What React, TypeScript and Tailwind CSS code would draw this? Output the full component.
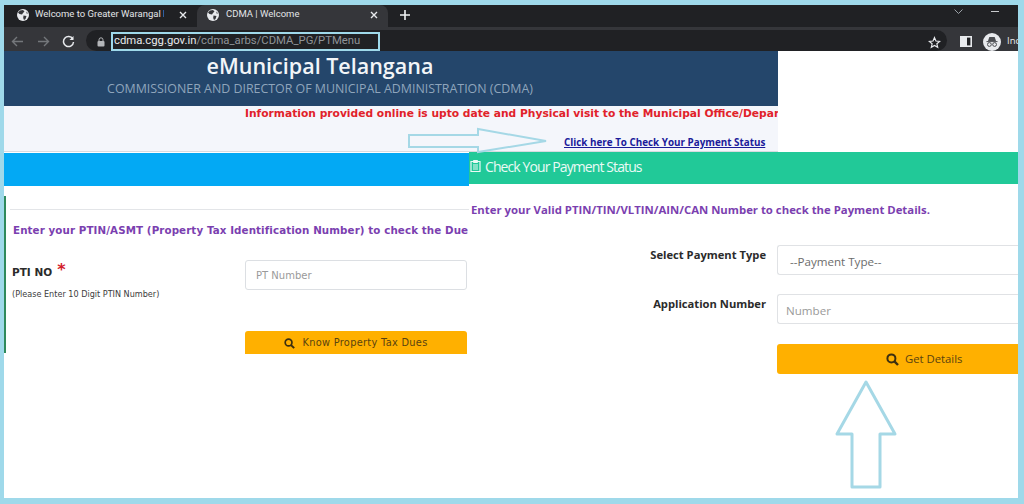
import React from "react";

const sans = "font-['Open_Sans','Noto_Sans',sans-serif]";
const roboto = "font-['Roboto','Open_Sans',sans-serif]";
const verdana = "font-['DejaVu_Sans',sans-serif]";

function Globe() {
  return (
    <svg width="12" height="12" viewBox="0 0 12 12" className="shrink-0">
      <circle cx="6" cy="6" r="6" fill="#e8eaed" />
      <path d="M3 1.5 L6 1 L7.5 2.5 L6 4 L5 5.5 L2.5 5 L1 3.5 Z M6.5 6.5 L9.5 7 L8.5 10 L7 11 L6.2 9 Z M9.5 2.5 L11 4.5 L9.5 4.5 Z" fill="#35363a" />
    </svg>
  );
}

function Close() {
  return (
    <svg width="8" height="8" viewBox="0 0 8 8" className="shrink-0">
      <path d="M1 1 L7 7 M7 1 L1 7" stroke="#e8eaed" strokeWidth="1.4" />
    </svg>
  );
}

function Search({ size = 13 }: { size?: number }) {
  return (
    <svg width={size} height={size} viewBox="0 0 13 13" className="shrink-0">
      <circle cx="5.4" cy="5.4" r="4" fill="none" stroke="#3d3010" strokeWidth="2" />
      <path d="M8.4 8.4 L12 12" stroke="#3d3010" strokeWidth="2.4" />
    </svg>
  );
}

export default function App() {
  return (
    <div className="relative flex h-[504px] w-[1024px] flex-col overflow-hidden bg-[#9fd9ea] pb-[6px] pl-1 pr-[6px] pt-[5px]">
      {/* tab strip */}
      <div className={`flex h-[22px] shrink-0 items-stretch bg-[#202124] text-[9.5px] text-[#e3e5e8] ${roboto}`}>
        <div className="flex w-[193px] items-center pb-[3px] pl-[13px]">
          <Globe />
          <span className="ml-[6px] w-[129px] overflow-hidden whitespace-nowrap">Welcome to Greater Warangal Municipal</span>
          <span className="ml-[15px]"><Close /></span>
        </div>
        <div className="flex w-[191px] items-center rounded-t-lg bg-[#35363a] pb-[3px] pl-[10px]">
          <Globe />
          <span className="ml-[7px] w-[144px] whitespace-nowrap">CDMA | Welcome</span>
          <Close />
        </div>
        <div className="ml-[12px] flex items-center pb-[3px]">
          <svg width="10" height="10" viewBox="0 0 10 10"><path d="M5 0 V10 M0 5 H10" stroke="#f1f3f4" strokeWidth="1.6" /></svg>
        </div>
        <div className="ml-auto flex items-center pb-[9px]">
          <svg width="9" height="5" viewBox="0 0 9 5"><path d="M0.5 0.5 L4.5 4.5 L8.5 0.5" fill="none" stroke="#9aa0a6" /></svg>
          <div className="ml-[28px] mr-[19px] h-px w-[8px] bg-[#c8cacc]" />
        </div>
      </div>

      {/* toolbar */}
      <div className="flex h-[24px] shrink-0 items-center bg-[#35363a] pl-[7px] pt-[5px]">
        <svg width="13" height="11" viewBox="0 0 13 11"><path d="M12 5.5 H2 M6 1 L1.5 5.5 L6 10" fill="none" stroke="#74777b" strokeWidth="1.4" /></svg>
        <svg width="13" height="11" viewBox="0 0 13 11" className="ml-[13px]"><path d="M1 5.5 H11 M7 1 L11.5 5.5 L7 10" fill="none" stroke="#74777b" strokeWidth="1.4" /></svg>
        <svg width="13" height="13" viewBox="0 0 13 13" className="ml-[12px]"><path d="M10.8 4 A5 5 0 1 0 11.5 7" fill="none" stroke="#e8eaed" strokeWidth="1.5" /><path d="M11.5 1 V5 H7.5 Z" fill="#e8eaed" /></svg>
        <div className="-mt-[2px] ml-[11px] flex w-[861px] items-center self-stretch rounded-l-full rounded-r-full bg-[#202124] pl-[11px]">
          <svg width="8" height="10" viewBox="0 0 8 10" className="mt-[2px] shrink-0"><rect x="0.5" y="4" width="7" height="5.5" rx="1" fill="#b4b6b9" /><path d="M2 4 V2.8 A2 2 0 0 1 6 2.8 V4" fill="none" stroke="#b4b6b9" /></svg>
          <div className={`ml-[6px] flex h-[19px] w-[269px] items-center self-end border-2 border-[#9fd9ea] pl-px text-[11.3px] text-[#8f9398] ${roboto}`}>
            <span className="whitespace-nowrap"><span className="text-[#e8eaed]">cdma.cgg.gov.in</span>/cdma_arbs/CDMA_PG/PTMenu</span>
          </div>
          <svg width="13" height="13" viewBox="0 0 24 24" className="ml-auto mr-[6px] mt-[3px]"><path d="M12 3 L14.7 9.3 L21.5 9.9 L16.4 14.4 L17.9 21 L12 17.5 L6.1 21 L7.6 14.4 L2.5 9.9 L9.3 9.3 Z" fill="none" stroke="#e8eaed" strokeWidth="2.2" /></svg>
        </div>
        <svg width="12" height="11" viewBox="0 0 12 11" className="ml-[13px] shrink-0"><rect x="0.8" y="0.8" width="10.4" height="9.4" fill="#202124" stroke="#e8eaed" strokeWidth="1.6" /><rect x="1" y="1" width="6" height="9" fill="#e8eaed" /></svg>
        <svg width="18" height="18" viewBox="0 0 18 18" className="ml-[11px] shrink-0">
          <circle cx="9" cy="9" r="9" fill="#e8eaed" />
          <path d="M5 8 L6.3 4 H11.7 L13 8 Z" fill="#4b4d51" />
          <path d="M3.5 8.6 H14.5" stroke="#4b4d51" />
          <circle cx="6.4" cy="11.5" r="1.9" fill="none" stroke="#4b4d51" />
          <circle cx="11.6" cy="11.5" r="1.9" fill="none" stroke="#4b4d51" />
        </svg>
        <span className={`ml-[6px] w-[11px] overflow-hidden whitespace-nowrap text-[9.5px] text-[#e8eaed] ${sans}`}>Incognito</span>
      </div>

      {/* page */}
      <div className="flex min-h-0 flex-1 flex-col bg-white">
        <div className={`flex h-[55px] w-[774px] shrink-0 flex-col items-center bg-[#24466b] pr-[142px] ${sans}`}>
          <div className="text-[21.5px] font-semibold leading-[30px] text-[#f2f5f8]">eMunicipal Telangana</div>
          <div className="-mt-px whitespace-nowrap text-[12.4px] leading-[18px] text-[#8fa5bc]">COMMISSIONER AND DIRECTOR OF MUNICIPAL ADMINISTRATION (CDMA)</div>
        </div>

        <div className={`h-[46px] w-[774px] shrink-0 overflow-hidden border-b border-[#d8dbe0] bg-[#f4f6fb] ${verdana}`}>
          <div className="mt-px whitespace-nowrap pl-[241px] text-[10.7px] font-bold leading-[14px] text-[#e1222a]">
            Information provided online is upto date and Physical visit to the Municipal Office/Department
          </div>
          <div className={`mt-[14px] whitespace-nowrap pl-[560px] text-[9.85px] font-bold leading-[14px] text-[#1b1b9a] underline ${sans}`}>
            Click here To Check Your Payment Status
          </div>
        </div>

        <div className="flex min-h-0 flex-1">
          {/* left panel */}
          <div className={`w-[465px] shrink-0 ${verdana}`}>
            <div className="mt-px h-[33px] bg-[#03a9f4]" />
            <div className="mt-[10px] h-[157px] border-l-2 border-[#2f8a5b] pt-[13px]">
              <div className="ml-1 h-px bg-[#e3e5e8]" />
              <div className="ml-[7px] mt-[13px] whitespace-nowrap text-[10.3px] font-bold leading-[14px] tracking-[0.1px] text-[#7b3fb0]">
                Enter your PTIN/ASMT (Property Tax Identification Number) to check the Due
              </div>
              <div className="mt-[23px] flex items-start pl-[6px]">
                <div className="w-[233px]">
                  <div className="mt-[5px] flex items-start text-[10.5px] font-bold leading-[14px] text-[#2b2b2b]">
                    PTI NO
                    <span className="ml-[5px] mt-[-2px] text-[16px] leading-[14px] text-[#d3202a]">*</span>
                  </div>
                  <div className="mt-[10px] text-[8.1px] leading-[10px] text-[#3c3c3c]">(Please Enter 10 Digit PTIN Number)</div>
                </div>
                <div className="flex h-[30px] w-[222px] items-center rounded-[3px] border border-[#dcdfe3] pl-[10px] text-[10px] text-[#9a9a9a]">
                  PT Number
                </div>
              </div>
              <div className="ml-[239px] mt-[32px] flex h-[23px] w-[222px] items-center justify-center rounded-t-[3px] bg-[#ffb000] pt-[2px] text-[9.8px] tracking-[0.3px] text-[#5a4310]">
                <Search size={11} />
                <span className="ml-[7px]">Know Property Tax Dues</span>
              </div>
            </div>
          </div>

          {/* right panel */}
          <div className={`min-w-0 flex-1 overflow-hidden ${sans}`}>
            <div className="flex h-[32px] items-center bg-[#21c998] pb-[4px] text-[14px] tracking-[-0.9px] text-[#eafaf5]">
              <svg width="11" height="12" viewBox="0 0 11 12" className="ml-px shrink-0">
                <path d="M1 1.5 H10 V11.5 H1 Z" fill="none" stroke="#eafaf5" strokeWidth="1.2" />
                <path d="M3.5 0.5 H7.5 V2.5 H3.5 Z M3 5 H8 M3 7 H8 M3 9 H8" stroke="#eafaf5" fill="#eafaf5" />
              </svg>
              <span className="ml-[4px]">Check Your Payment Status</span>
            </div>
            <div className="ml-[2px] mt-[19px] whitespace-nowrap text-[11.35px] font-bold leading-[14px] text-[#7b3fb0]">
              Enter your Valid PTIN/TIN/VLTIN/AIN/CAN Number to check the Payment Details.
            </div>
            <div className="mt-[28px] grid grid-cols-[297px_241px] gap-x-[11px] gap-y-[19px]">
              <div className="pt-[2px] text-right text-[11.2px] font-bold leading-[16px] text-[#2b2b2b]">Select Payment Type</div>
              <div className="flex h-[30px] items-center rounded-l-[3px] border border-r-0 border-[#e0e2e5] pl-[12px] pt-[3px] text-[11.6px] text-[#6c6c6c]">--Payment Type--</div>
              <div className="pt-[2px] text-right text-[11.2px] font-bold leading-[16px] text-[#2b2b2b]">Application Number</div>
              <div className="flex h-[30px] items-center rounded-l-[3px] border border-r-0 border-[#e0e2e5] pl-[8px] pt-[3px] text-[11.6px] text-[#9a9a9a]">Number</div>
              <div />
              <div className="mt-px flex h-[30px] items-center justify-start rounded-l-[3px] bg-[#ffb000] pl-[109px] text-[11.3px] text-[#5a4310]">
                <Search size={13} />
                <span className="ml-[6px]">Get Details</span>
              </div>
            </div>
          </div>
        </div>
      </div>

      {/* annotation arrows */}
      <svg width="1024" height="504" viewBox="0 0 1024 504" className="pointer-events-none absolute left-0 top-0">
        <path d="M409 135 H478 V129 L546 141 L478 152 V147 H409 Z" fill="none" stroke="#a5d8e6" strokeWidth="2" />
        <path d="M866 382 L895 434 H880 V487 H852 V434 H837 Z" fill="#ffffff" stroke="#a5d8e6" strokeWidth="3" strokeLinejoin="round" />
      </svg>
    </div>
  );
}
